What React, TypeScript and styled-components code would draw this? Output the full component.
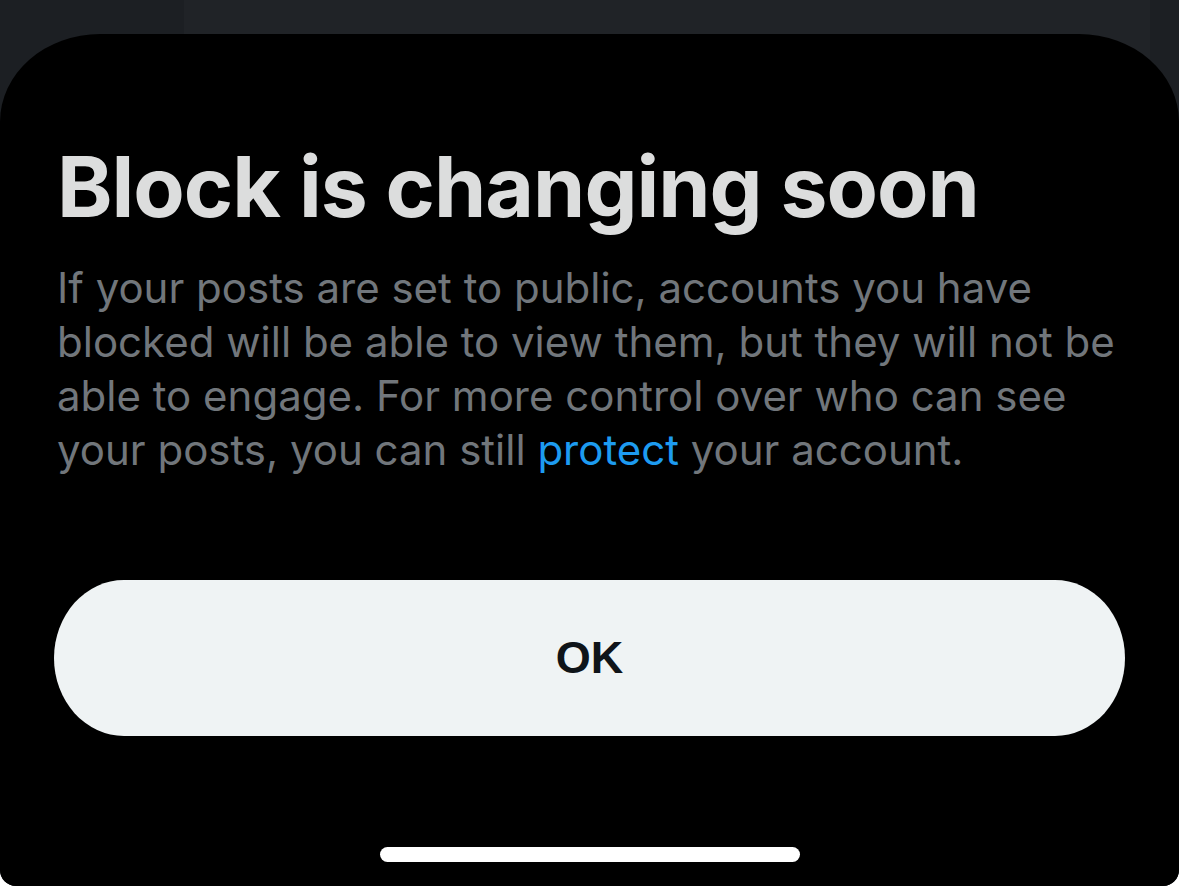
import React from 'react';
import { styled, createGlobalStyle } from 'styled-components';

const GlobalStyle = createGlobalStyle`
  html, body {
    margin: 0;
    padding: 0;
    background: #ffffff;
  }
  body {
    font-family: Inter, "Noto Sans", sans-serif;
    -webkit-font-smoothing: antialiased;
  }
`;

const Screen = styled.div`
  position: relative;
  width: 1179px;
  height: 886px;
  overflow: hidden;
  border-radius: 0 0 16px 16px;
  background: #1c1f23;
  display: grid;
  grid-template-columns: 184px 1fr 29px;
`;

const BackPanel = styled.div`
  grid-column: 2;
  background: #202327;
`;

// bottom sheet sits over the dimmed page behind it
const Sheet = styled.section`
  position: absolute;
  top: 34px;
  left: 0;
  right: 0;
  bottom: 0;
  background: #000000;
  border-radius: 100px 100px 0 0 / 88px 88px 0 0;
  display: flex;
  flex-direction: column;
  padding: 110px 54px 0 57px;
`;

const Title = styled.h1`
  margin: 0;
  font-size: 84px;
  line-height: 86px;
  font-weight: 700;
  letter-spacing: -1px;
  color: #dcdddd;
`;

const Body = styled.p`
  margin: 31px 0 0;
  font-size: 42px;
  line-height: 54px;
  font-weight: 400;
  color: #71767b;
`;

const Line = styled.span`
  display: block;
  white-space: nowrap;
`;

const Link = styled.span`
  color: #1d9bf0;
`;

const OkButton = styled.button`
  margin: 103px 0 0 -3px;
  height: 156px;
  border: none;
  border-radius: 70px / 78px;
  background: #eff3f4;
  color: #0f1419;
  font-family: "Liberation Sans", Arial, sans-serif;
  font-size: 45px;
  font-weight: 700;
  cursor: pointer;
`;

const HomeIndicator = styled.div`
  align-self: center;
  margin: auto 0 24px -3px;
  width: 420px;
  height: 15px;
  border-radius: 8px;
  background: #ffffff;
`;

export default function App() {
  return (
    <>
      <GlobalStyle />
      <Screen>
        <BackPanel />
        <Sheet>
          <Title>Block is changing soon</Title>
          <Body>
            <Line>If your posts are set to public, accounts you have</Line>
            <Line>blocked will be able to view them, but they will not be</Line>
            <Line>able to engage. For more control over who can see</Line>
            <Line>
              your posts, you can still <Link>protect</Link> your account.
            </Line>
          </Body>
          <OkButton>OK</OkButton>
          <HomeIndicator />
        </Sheet>
      </Screen>
    </>
  );
}
